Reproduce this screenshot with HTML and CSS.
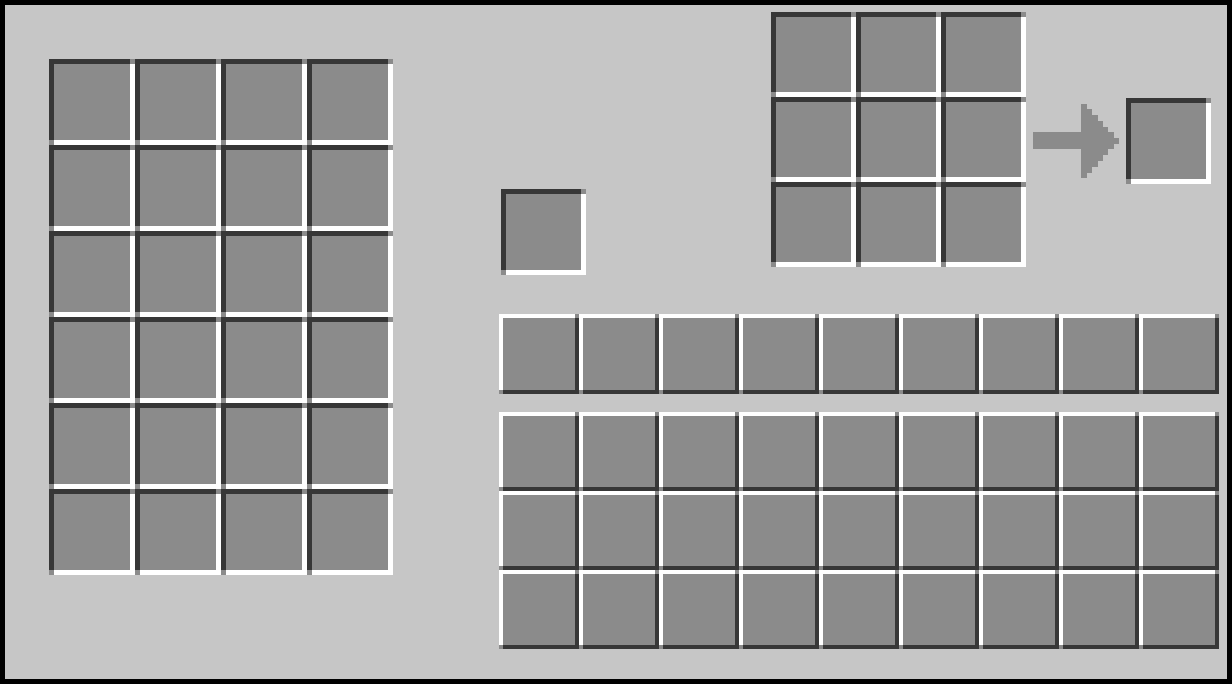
FILE: index.html
```html
<!DOCTYPE html>
<html>
<head>
<meta charset="utf-8">
<link rel="stylesheet" href="styles.css">
</head>
<body>
<div class="frame">
  <div class="storage">
    <div class="slot big"></div><div class="slot big"></div><div class="slot big"></div><div class="slot big"></div>
    <div class="slot big"></div><div class="slot big"></div><div class="slot big"></div><div class="slot big"></div>
    <div class="slot big"></div><div class="slot big"></div><div class="slot big"></div><div class="slot big"></div>
    <div class="slot big"></div><div class="slot big"></div><div class="slot big"></div><div class="slot big"></div>
    <div class="slot big"></div><div class="slot big"></div><div class="slot big"></div><div class="slot big"></div>
    <div class="slot big"></div><div class="slot big"></div><div class="slot big"></div><div class="slot big"></div>
  </div>
  <div class="right">
    <div class="top">
      <div class="slot single"></div>
      <div class="crafting">
        <div class="slot"></div><div class="slot"></div><div class="slot"></div>
        <div class="slot"></div><div class="slot"></div><div class="slot"></div>
        <div class="slot"></div><div class="slot"></div><div class="slot"></div>
      </div>
      <svg class="arrow" width="86" height="74" viewBox="0 0 86 74" shape-rendering="crispEdges">
        <polygon fill="#8b8b8b" points="0,28 48,28 48,0 54,0 54,5 59,5 59,11 65,11 65,17 70,17 70,23 75,23 75,28 81,28 81,34 86,34 86,40 81,40 81,45 75,45 75,51 70,51 70,57 65,57 65,63 59,63 59,69 54,69 54,74 48,74 48,45 0,45"/>
      </svg>
      <div class="slot result"></div>
    </div>
    <div class="hotbar">
      <div class="slot raised"></div><div class="slot raised"></div><div class="slot raised"></div>
      <div class="slot raised"></div><div class="slot raised"></div><div class="slot raised"></div>
      <div class="slot raised"></div><div class="slot raised"></div><div class="slot raised"></div>
    </div>
    <div class="inventory">
      <div class="slot raised"></div><div class="slot raised"></div><div class="slot raised"></div>
      <div class="slot raised"></div><div class="slot raised"></div><div class="slot raised"></div>
      <div class="slot raised"></div><div class="slot raised"></div><div class="slot raised"></div>
      <div class="slot raised"></div><div class="slot raised"></div><div class="slot raised"></div>
      <div class="slot raised"></div><div class="slot raised"></div><div class="slot raised"></div>
      <div class="slot raised"></div><div class="slot raised"></div><div class="slot raised"></div>
      <div class="slot raised"></div><div class="slot raised"></div><div class="slot raised"></div>
      <div class="slot raised"></div><div class="slot raised"></div><div class="slot raised"></div>
      <div class="slot raised"></div><div class="slot raised"></div><div class="slot raised"></div>
    </div>
  </div>
</div>
</body>
</html>
```

FILE: styles.css
```css
html, body {
  margin: 0;
  padding: 0;
  background: #000;
}

.frame {
  box-sizing: border-box;
  width: 1232px;
  height: 684px;
  border: 5px solid #000;
  background: #c6c6c6;
  display: flex;
  align-items: flex-start;
  overflow: hidden;
}

.slot {
  --d: #373737;
  --l: #ffffff;
  --b: 5px;
  --g: #8b8b8b;
  background:
    linear-gradient(var(--g), var(--g)) right top / var(--b) var(--b) no-repeat,
    linear-gradient(var(--g), var(--g)) left bottom / var(--b) var(--b) no-repeat,
    linear-gradient(var(--d), var(--d)) left top / 100% var(--b) no-repeat,
    linear-gradient(var(--d), var(--d)) left top / var(--b) 100% no-repeat,
    linear-gradient(var(--l), var(--l)) left bottom / 100% var(--b) no-repeat,
    linear-gradient(var(--l), var(--l)) right top / var(--b) 100% no-repeat,
    var(--g);
}

.slot.raised {
  --d: #ffffff;
  --l: #373737;
  --b: 4px;
}

/* left storage grid */
.storage {
  margin: 54px 0 0 44px;
  display: grid;
  grid-template-columns: repeat(4, 86px);
  grid-auto-rows: 86px;
}

.right {
  margin-left: 106px;
  width: 720px;
  display: flex;
  flex-direction: column;
}

.top {
  height: 309px;
  display: flex;
  align-items: flex-start;
}

.single {
  width: 85px;
  height: 86px;
  margin: 184px 0 0 2px;
  flex: none;
}

.crafting {
  margin: 7px 0 0 185px;
  display: grid;
  grid-template-columns: repeat(3, 85px);
  grid-auto-rows: 85px;
  flex: none;
}

.arrow {
  display: block;
  margin: 99px 0 0 7px;
  flex: none;
}

.result {
  width: 85px;
  height: 86px;
  margin: 93px 0 0 7px;
  flex: none;
}

.hotbar {
  display: grid;
  grid-template-columns: repeat(9, 80px);
  grid-auto-rows: 80px;
}

.inventory {
  margin-top: 18px;
  display: grid;
  grid-template-columns: repeat(9, 80px);
  grid-auto-rows: 79px;
}
```
